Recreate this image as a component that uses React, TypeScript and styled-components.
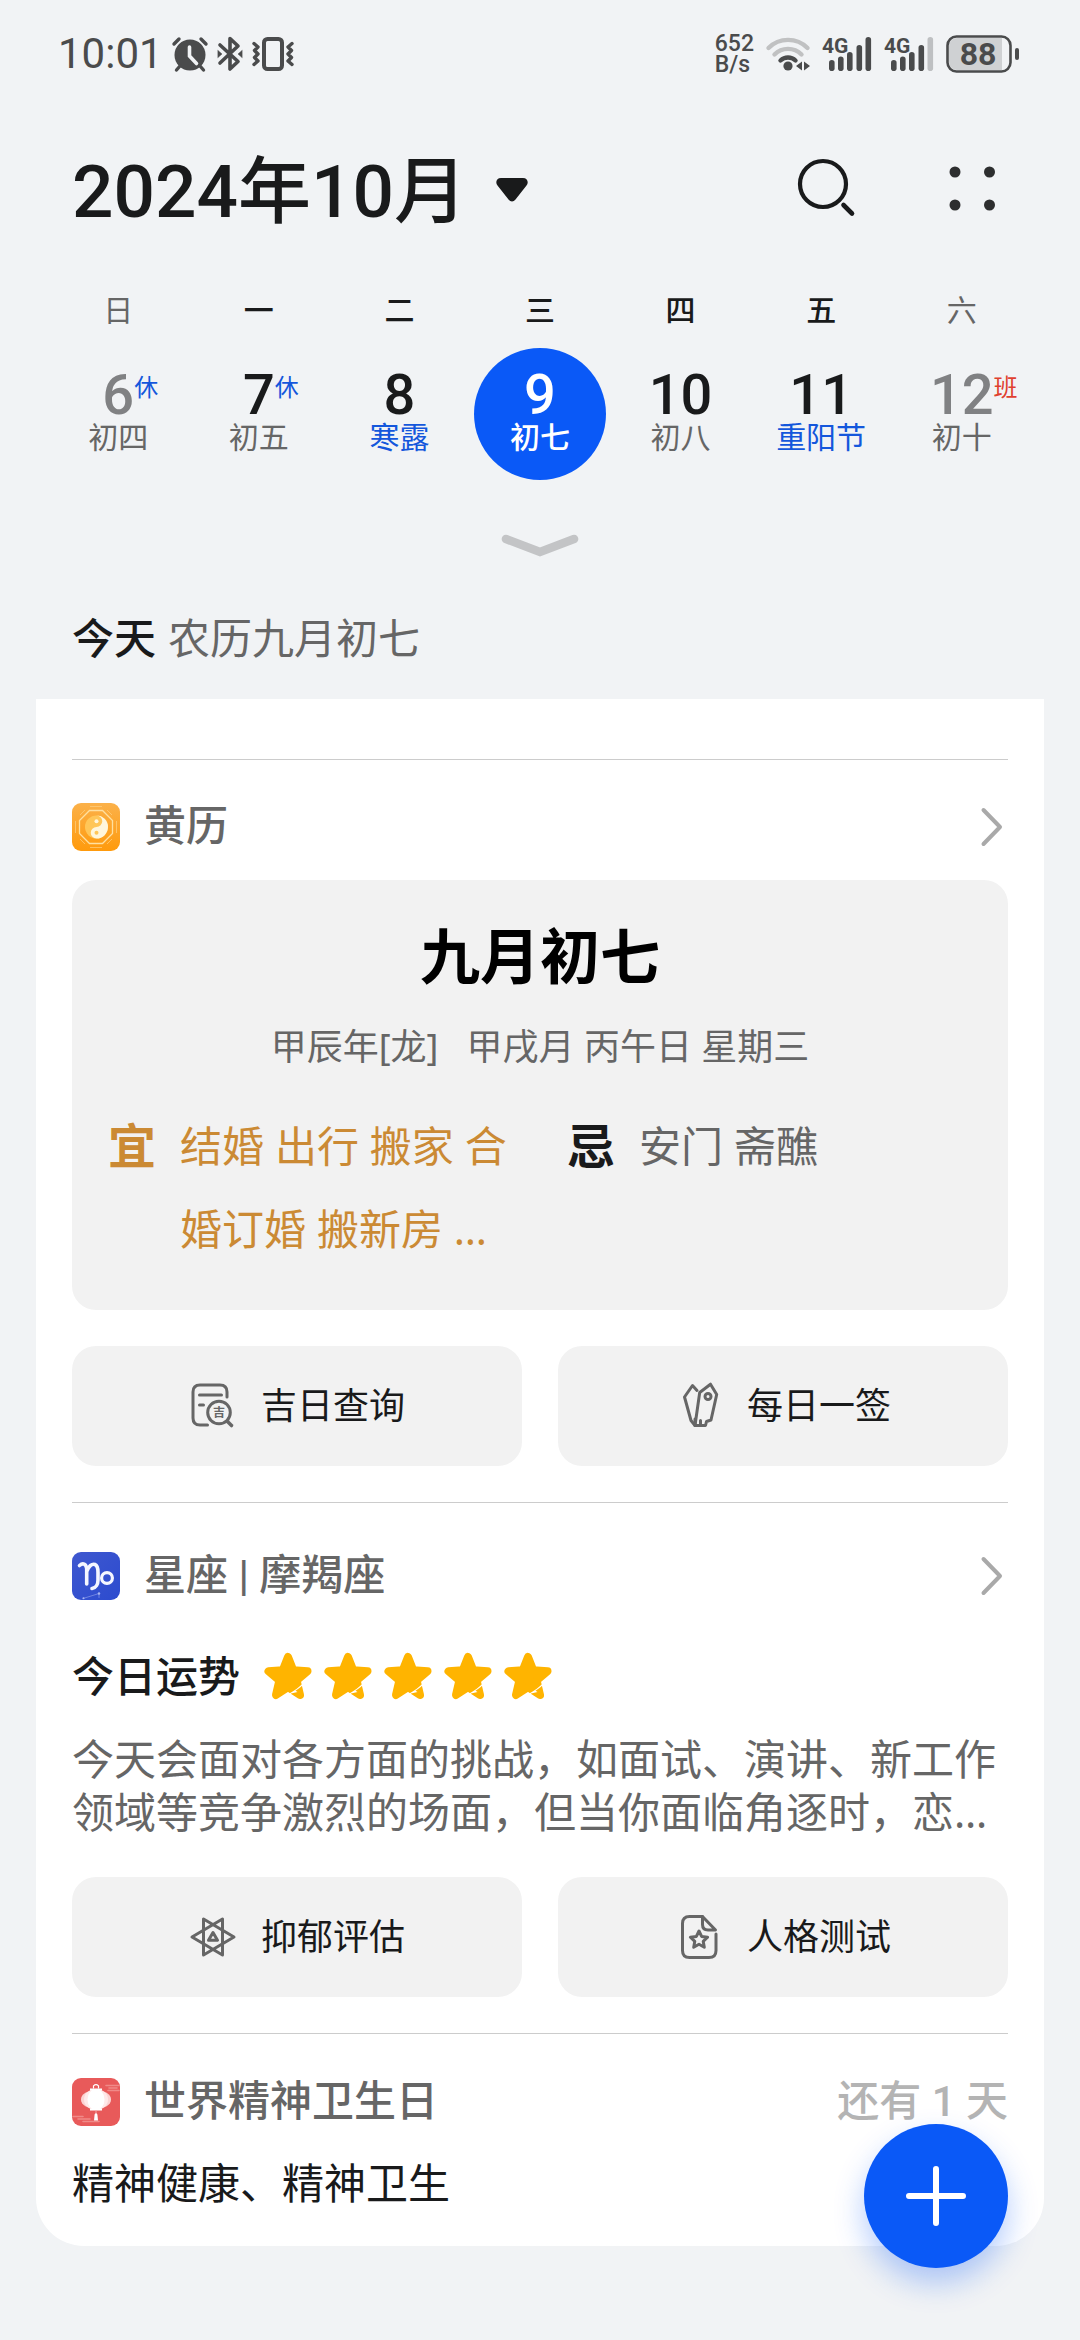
import React from "react";
import styled, { createGlobalStyle } from "styled-components";

const color = {
  page: "#f1f3f5",
  card: "#ffffff",
  tile: "#f2f2f2",
  ink: "#191a1b",
  status: "#4a4b4c",
  soft: "#666666",
  faded: "#808183",
  pale: "#b4b4b4",
  line: "#cccccc",
  accent: "#0a59f7",
  festival: "#1457dc",
  work: "#e0402f",
  gold: "#cb8a34",
  star: "#ffb400",
};

const numeric = `Roboto, "Noto Sans CJK SC", sans-serif`;

const GlobalStyle = createGlobalStyle`
  *, *::before, *::after { box-sizing: border-box; }
  body {
    margin: 0;
    background: ${color.page};
    color: ${color.ink};
    font-family: "Noto Sans", "Noto Sans CJK SC", sans-serif;
    font-size: 42px;
    line-height: 56px;
  }
  h1, h2, h3, p, ul, dl, dd, dt { margin: 0; padding: 0; }
  button { font: inherit; color: inherit; background: none; border: 0; padding: 0; cursor: pointer; }
  svg { display: block; flex: none; overflow: visible; }
`;

const Page = styled.div`
  display: flex;
  flex-direction: column;
  min-height: 100vh;
  padding-bottom: 93px;
`;

/* ---------- status bar ---------- */

const StatusBar = styled.div`
  display: flex;
  align-items: center;
  justify-content: space-between;
  height: 108px;
  padding: 0 60px 0 58px;
  color: ${color.status};
  font-family: ${numeric};
`;

const StatusGroup = styled.div<{ $gap: number }>`
  display: flex;
  align-items: center;
  gap: ${(p) => p.$gap}px;
`;

const Clock = styled.span`
  font-size: 42px;
  line-height: 48px;
`;

const Speed = styled.span`
  display: flex;
  flex-direction: column;
  font-size: 23px;
  font-weight: 500;
  line-height: 21px;
`;

const SignalSvg = styled.svg`
  font-size: 21px;
  font-weight: 700;
`;

/* ---------- header ---------- */

const Header = styled.header`
  display: flex;
  align-items: center;
  justify-content: space-between;
  padding: 32px 84px 32px 72px;
`;

const MonthButton = styled.button`
  display: flex;
  align-items: center;
  gap: 28px;
`;

const MonthTitle = styled.h1`
  padding-top: 4px;
  font-family: ${numeric};
  font-size: 73px;
  font-weight: 500;
  line-height: 96px;
`;

const HeaderActions = styled.div`
  display: flex;
  gap: 94px;
`;

const Week = styled.div`
  display: grid;
  grid-template-columns: repeat(7, 1fr);
  padding: 0 48px;
  text-align: center;
`;

const Weekday = styled.div<{ $weekend: boolean }>`
  height: 76px;
  padding-top: 18px;
  font-size: 30px;
  font-weight: ${(p) => (p.$weekend ? 400 : 500)};
  line-height: 40px;
  color: ${(p) => (p.$weekend ? color.soft : color.ink)};
`;

const Day = styled.button<{ $selected?: boolean }>`
  display: flex;
  flex-direction: column;
  align-items: center;
  justify-self: center;
  width: 132px;
  height: 132px;
  padding-top: 24px;
  border-radius: 50%;
  background: ${(p) => (p.$selected ? color.accent : "transparent")};
`;

type Tone = "normal" | "muted" | "selected";
const dayColor = { normal: color.ink, muted: color.faded, selected: "#ffffff" };

const DayNumber = styled.span<{ $tone: Tone }>`
  position: relative;
  font-family: ${numeric};
  font-size: 56px;
  font-weight: 500;
  line-height: 46px;
  color: ${(p) => dayColor[p.$tone]};
`;

const Lunar = styled.span<{ $tone: "normal" | "festival" | "selected" }>`
  font-size: 30px;
  line-height: 38px;
  white-space: nowrap;
  font-weight: ${(p) => (p.$tone === "selected" ? 500 : 400)};
  color: ${(p) => ({ normal: color.soft, festival: color.festival, selected: "#ffffff" })[p.$tone]};
`;

const Badge = styled.span<{ $work?: boolean }>`
  position: absolute;
  left: 100%;
  top: 0;
  font-size: 24px;
  font-weight: 400;
  line-height: 32px;
  color: ${(p) => (p.$work ? color.work : color.festival)};
`;

const ExpandButton = styled.button`
  display: flex;
  align-items: center;
  justify-content: center;
  height: 130px;
`;

const TodayLine = styled.h2`
  display: flex;
  gap: 12px;
  margin-bottom: 33px;
  padding: 0 72px;
  font-size: 42px;
  font-weight: 500;
  line-height: 56px;
`;

const LunarDate = styled.span`
  font-weight: 400;
  color: ${color.soft};
`;

/* ---------- cards ---------- */

const Card = styled.main`
  margin: 0 36px;
  padding: 60px 36px 35px;
  border-radius: 0 0 48px 48px;
  background: ${color.card};
`;

const Section = styled.section<{ $top: number; $bottom?: number }>`
  display: flex;
  flex-direction: column;
  padding: ${(p) => p.$top}px 0 ${(p) => p.$bottom ?? 0}px;
  border-top: 1px solid ${color.line};
`;

const SectionHead = styled.div`
  display: flex;
  align-items: center;
  gap: 24px;
  height: 52px;
  margin: -2px 0;
  padding-top: 2px;
  font-family: ${numeric};
`;

const SectionTitle = styled.h3`
  flex: 1;
  font-size: 42px;
  font-weight: 500;
  line-height: 56px;
  color: ${color.soft};
`;

const Remaining = styled.span`
  font-weight: 500;
  color: ${color.pale};
`;

const Almanac = styled.div`
  display: flex;
  flex-direction: column;
  align-items: center;
  margin-top: 30px;
  padding: 36px 36px 40px;
  border-radius: 24px;
  background: ${color.tile};
`;

const AlmanacTitle = styled.h3`
  font-size: 60px;
  font-weight: 700;
  line-height: 80px;
  color: #000000;
`;

const AlmanacSub = styled.p`
  margin-top: 27px;
  font-size: 36px;
  line-height: 48px;
  color: ${color.soft};
  white-space: pre;
`;

const Advice = styled.dl`
  display: grid;
  grid-template-columns: 1fr 1fr;
  gap: 54px;
  align-self: stretch;
  margin-top: 33px;
`;

const AdviceItem = styled.div<{ $good?: boolean }>`
  display: flex;
  gap: 24px;
  color: ${(p) => (p.$good ? color.gold : color.soft)};
`;

const AdviceMark = styled.dt<{ $good?: boolean }>`
  font-size: 48px;
  font-weight: 700;
  line-height: 83px;
  color: ${(p) => (p.$good ? color.gold : color.ink)};
`;

const AdviceText = styled.dd`
  line-height: 83px;
`;

const ButtonRow = styled.div<{ $top: number }>`
  display: grid;
  grid-template-columns: 1fr 1fr;
  gap: 36px;
  margin-top: ${(p) => p.$top}px;
`;

const TileButton = styled.button`
  display: flex;
  align-items: center;
  justify-content: center;
  gap: 24px;
  height: 120px;
  border-radius: 24px;
  background: ${color.tile};
  font-size: 36px;
  line-height: 48px;
`;

const Fortune = styled.div`
  display: flex;
  align-items: center;
  gap: 24px;
  margin-top: 49px;
  font-weight: 500;
`;

const Stars = styled.div`
  display: flex;
  gap: 12px;
`;

const Forecast = styled.p`
  margin-top: 28px;
  line-height: 53px;
  color: ${color.soft};
`;

const Note = styled.p`
  margin-top: 30px;
`;

const AddButton = styled.button`
  position: fixed;
  right: 72px;
  bottom: 72px;
  display: flex;
  align-items: center;
  justify-content: center;
  width: 144px;
  height: 144px;
  border-radius: 50%;
  background: ${color.accent};
  box-shadow: 0 15px 30px rgba(10, 89, 247, 0.3);
`;

/* ---------- drawings ---------- */

const AlarmIcon = () => (
  <svg width="36" height="36" viewBox="0 0 36 36" fill="none" stroke="currentColor" strokeLinecap="round">
    <circle cx="18" cy="19" r="15.5" fill="currentColor" stroke="none" />
    <path d="M2 8 7 3M34 8 29 3" strokeWidth="3.4" />
    <path d="M8 30 4.5 34M28 30l3.500 4" strokeWidth="3.4" />
    <path d="M17.5 11v9l7 7.500" stroke={color.page} strokeWidth="3.6" />
  </svg>
);

const BluetoothIcon = () => (
  <svg width="26" height="36" viewBox="0 0 26 36" fill="none" stroke="currentColor" strokeWidth="3.6" strokeLinecap="round" strokeLinejoin="round">
    <path d="M3 9 21 25.5 13 33V2.500l8 7.500L3 27" />
    <path d="M1 14.500 5 18l-4 3.500ZM25 14.500 21 18l4 3.500Z" fill="currentColor" strokeWidth="0.5" />
  </svg>
);

const VibrateIcon = () => (
  <svg width="42" height="36" viewBox="0 0 42 36" fill="none" stroke="currentColor" strokeLinecap="round" strokeLinejoin="round">
    <rect x="12" y="3" width="18" height="30" rx="3.5" strokeWidth="4" />
    <path d="M2 7.500 6 11l-3.500 3.500L6 18l-3.500 3.500L6 25l-4 3.500M40 7.500 36 11l3.500 3.500L36 18l3.500 3.500L36 25l4 3.500" strokeWidth="3.4" />
  </svg>
);

const WifiIcon = () => (
  <svg width="44" height="36" viewBox="0 0 44 36" fill="none" stroke="currentColor" strokeWidth="4.4" strokeLinecap="round">
    <g stroke="#c0c1c2">
      <path d="M2.500 12a27.500 27.500 0 0 1 39 0" />
      <path d="M8.500 18.500a19 19 0 0 1 27 0" />
    </g>
    <path d="M14.500 24.500a11 11 0 0 1 15 0" />
    <circle cx="22" cy="30" r="4.6" fill="currentColor" stroke="none" />
    <path d="M30 30l6-4.500v9ZM44 30l-6-4.500v9Z" fill="currentColor" stroke="none" />
  </svg>
);

const BARS = [
  [7, 24],
  [16, 20.5],
  [25, 16],
  [34.5, 9],
  [43.5, 1],
];

const SignalIcon = ({ level }: { level: number }) => (
  <SignalSvg width="50" height="36" viewBox="0 0 50 36" fill="currentColor">
    <text x="0" y="17">4G</text>
    {BARS.map(([x, y], i) => (
      <rect key={x} x={x} y={y} width="5.6" height={35 - y} rx="2.8" opacity={i < level ? 1 : 0.3} />
    ))}
  </SignalSvg>
);

const BatteryIcon = () => (
  <svg width="74" height="38" viewBox="0 0 74 38" fill="currentColor" fontSize="32" fontWeight="700">
    <path d="M11 3h45v32H11a8 8 0 0 1-8-8V11a8 8 0 0 1 8-8Z" opacity="0.2" />
    <rect x="1.5" y="1.5" width="63" height="35" rx="9" fill="none" stroke="currentColor" strokeWidth="2.6" />
    <rect x="69" y="13" width="4" height="12" rx="2" />
    <text x="32" y="30" textAnchor="middle">88</text>
  </svg>
);

const CaretIcon = () => (
  <svg width="34" height="26" viewBox="0 0 34 26" fill="currentColor">
    <path d="M6 1h22c4.500 0 6 4.500 3.500 7.500L20.500 22.500c-2 2.600-5 2.600-7 0L2.500 8.500C0 5.500 1.500 1 6 1Z" />
  </svg>
);

const SearchIcon = () => (
  <svg width="60" height="64" viewBox="0 0 60 64" fill="none" stroke="currentColor" strokeWidth="4.2" strokeLinecap="round">
    <circle cx="27" cy="26" r="23" />
    <path d="M47.500 47 56 55.500" strokeWidth="4.6" />
  </svg>
);

const DotsIcon = () => (
  <svg width="46" height="64" viewBox="0 0 46 64" fill="#2d2e2f">
    <circle cx="5" cy="14" r="5.5" />
    <circle cx="39.5" cy="14" r="5.5" />
    <circle cx="5" cy="47" r="5.5" />
    <circle cx="39.5" cy="47" r="5.5" />
  </svg>
);

const ExpandIcon = () => (
  <svg width="80" height="26" viewBox="0 0 80 26" fill="none" stroke="#c3c4c6" strokeWidth="8.6" strokeLinecap="round">
    <path d="M6 7 40 20 74 7" strokeLinejoin="miter" />
  </svg>
);

const ChevronIcon = () => (
  <svg width="36" height="48" viewBox="0 0 36 48" fill="none" stroke="#a9a9a9" strokeWidth="4" strokeLinecap="round" strokeLinejoin="round">
    <path d="M11.500 7 28 24 11.500 41" />
  </svg>
);

const TaijiIcon = () => (
  <svg width="48" height="48" viewBox="0 0 48 48" fill="none">
    <defs>
      <linearGradient id="amber" x1="0" y1="0" x2="0" y2="1">
        <stop offset="0" stopColor="#fbb14a" />
        <stop offset="1" stopColor="#ff9a0c" />
      </linearGradient>
    </defs>
    <rect width="48" height="48" rx="9" fill="url(#amber)" />
    <path d="M17.500 7.500h13l10 10v13l-10 10h-13l-10-10v-13Z" stroke="#ffe0a0" strokeWidth="1.3" />
    <path d="M18 3.500h12M18 44.500h12M3.500 18v12M44.500 18v12M8 12l5-5M35 7l5 5M8 36l5 5M35 41l5-5" stroke="#ffd080" strokeWidth="1" opacity="0.7" />
    <circle cx="24.5" cy="24" r="11.5" fill="#ffc658" />
    <path d="M24.500 12.500a11.500 11.500 0 0 1 0 23 5.750 5.750 0 0 1 0-11.500 5.750 5.750 0 0 0 0-11.500Z" fill="#fff6dc" />
    <circle cx="24.5" cy="18.3" r="2" fill="#fff6dc" />
    <circle cx="24.5" cy="29.8" r="2" fill="#ffc658" />
  </svg>
);

const CapricornIcon = () => (
  <svg width="48" height="48" viewBox="0 0 48 48" fill="none" strokeLinecap="round" strokeLinejoin="round">
    <defs>
      <linearGradient id="indigo" x1="0" y1="0" x2="1" y2="1">
        <stop offset="0" stopColor="#3f58cf" />
        <stop offset="1" stopColor="#2c4bcf" />
      </linearGradient>
    </defs>
    <rect width="48" height="48" rx="9" fill="url(#indigo)" />
    <path d="M7.500 13.500c3.500-3 6.500-1.500 7.200 3V32M15 19c1.500-5 5-7.500 8-6.500 2.500 1 3 4 3 8V28c0 4-2 8-6 8.500" stroke="#f4f6ff" strokeWidth="3.6" />
    <circle cx="35" cy="26" r="5.4" stroke="#f4f6ff" strokeWidth="3.2" />
    <path d="M11 46.500 27 41.500v4" stroke="#7f92e6" strokeWidth="0.8" />
    <circle cx="27" cy="41.5" r="1.2" fill="#a9b6f2" />
    <circle cx="11.5" cy="46.3" r="1" fill="#a9b6f2" />
  </svg>
);

const LanternIcon = () => (
  <svg width="48" height="48" viewBox="0 0 48 48" fill="none" strokeLinecap="round">
    <rect width="48" height="48" rx="9" fill="#e85a5a" />
    <path d="M34 7.500h13M37 10h8M36 12.500h11M1 38.500h10M6 41h12M11 43.500h16" stroke="#f08a88" strokeWidth="1.6" />
    <ellipse cx="24" cy="21.5" rx="15" ry="9.5" fill="#fbd3d3" />
    <ellipse cx="24" cy="21.5" rx="12" ry="10.5" fill="#ffe9e9" />
    <ellipse cx="24" cy="21.5" rx="8.5" ry="10.5" fill="#ffffff" />
    <path d="M18 10.500h12v2H18ZM18 30.500h12v2H18Z" fill="#ffffff" />
    <path d="M21.500 10V7.800c1.500-1.500 3.500-1.500 5 0V10" stroke="#ffffff" strokeWidth="1.2" />
    <path d="M24 33v3" stroke="#f4a5a5" strokeWidth="1" />
    <path d="M22.500 37.500c0-3 3-3 3 0l.5 5h-4Z" fill="#ffffff" />
  </svg>
);

const tileStroke = {
  width: 48,
  height: 48,
  viewBox: "0 0 48 48",
  fill: "none",
  stroke: color.soft,
  strokeWidth: 3,
  strokeLinecap: "round" as const,
  strokeLinejoin: "round" as const,
};

const LuckyDayIcon = () => (
  <svg {...tileStroke}>
    <path d="M18.500 43H11c-4.500 0-7-2.500-7-7V10c0-4.500 2.500-7 7-7h20c4.500 0 7 2.500 7 7v5" />
    <path d="M10.500 13h22M10.500 23h4" />
    <circle cx="30" cy="30.5" r="11.3" />
    <path d="M38.500 39.500 42.500 43.500" strokeWidth="3.6" />
    <text x="30" y="35" fontSize="12" fontWeight="700" textAnchor="middle" fill={color.soft} stroke="none">吉</text>
  </svg>
);

const DrawLotIcon = () => (
  <svg {...tileStroke}>
    <path d="M35.500 2.200 41.700 12.500 36 38l-4.500 1.500-1 4H20l4.700-33Z" />
    <circle cx="33" cy="14.5" r="3" />
    <path d="M22 8.500 17.500 3.500 9.500 15 16 38.500l4 5" />
    <path d="M20 37v5M25.500 38.500v4" />
  </svg>
);

const AssessIcon = () => (
  <svg {...tileStroke}>
    <path d="M3 24 33.500 6v36ZM45 24 14.500 6v36Z" />
    <path d="m24 19.500 4.500 7.800h-9Z" />
  </svg>
);

const PersonalityIcon = () => (
  <svg {...tileStroke}>
    <path d="M27.500 3.500H14.500c-4.500 0-7 2.500-7 7v27c0 4.500 2.500 7 7 7h19.500c4.500 0 7-2.500 7-7V21" />
    <path d="M27.500 3.500 40.500 17H33c-3.500 0-5.500-2-5.500-5.500Z" />
    <path d="m24 18 2.600 5.400 6 .8-4.400 4.100 1.100 5.900-5.300-2.900-5.300 2.900 1.100-5.900-4.400-4.100 6-.8Z" />
  </svg>
);

const StarIcon = () => (
  <svg width="48" height="48" viewBox="0 0 48 48">
    <path
      d="M24 5 29.200 18.300 43.500 19.300 32.600 28.500 36 43 24 35.200 12 43 15.400 28.500 4.500 19.300 18.800 18.300Z"
      fill={color.star}
      stroke={color.star}
      strokeWidth="8"
      strokeLinejoin="round"
    />
    <path d="M40.500 30C34 36.500 27 41 15 47.500V50H27V41.500L33.500 40 31.500 38.800C35 36.500 38 34 40.500 31.500Z" fill="#ffffff" />
  </svg>
);

const PlusIcon = () => (
  <svg width="60" height="60" viewBox="0 0 60 60" stroke="#ffffff" strokeWidth="6" strokeLinecap="round">
    <path d="M3 30h54M30 3v54" />
  </svg>
);

/* ---------- data ---------- */

interface DayInfo {
  weekday: string;
  date: number;
  lunar: string;
  festival?: boolean;
  weekend?: boolean;
  selected?: boolean;
  badge?: "休" | "班";
}

const WEEK: DayInfo[] = [
  { weekday: "日", date: 6, lunar: "初四", weekend: true, badge: "休" },
  { weekday: "一", date: 7, lunar: "初五", badge: "休" },
  { weekday: "二", date: 8, lunar: "寒露", festival: true },
  { weekday: "三", date: 9, lunar: "初七", selected: true },
  { weekday: "四", date: 10, lunar: "初八" },
  { weekday: "五", date: 11, lunar: "重阳节", festival: true },
  { weekday: "六", date: 12, lunar: "初十", weekend: true, badge: "班" },
];

export default function App() {
  return (
    <Page lang="zh-CN">
      <GlobalStyle />
      <StatusBar>
        <StatusGroup $gap={9}>
          <Clock>10:01</Clock>
          <AlarmIcon />
          <BluetoothIcon />
          <VibrateIcon />
        </StatusGroup>
        <StatusGroup $gap={12}>
          <Speed>
            <span>652</span>
            <span>B/s</span>
          </Speed>
          <WifiIcon />
          <SignalIcon level={5} />
          <SignalIcon level={4} />
          <BatteryIcon />
        </StatusGroup>
      </StatusBar>

      <Header>
        <MonthButton>
          <MonthTitle>2024年10月</MonthTitle>
          <CaretIcon />
        </MonthButton>
        <HeaderActions>
          <button aria-label="搜索">
            <SearchIcon />
          </button>
          <button aria-label="更多">
            <DotsIcon />
          </button>
        </HeaderActions>
      </Header>

      <Week>
        {WEEK.map((d) => (
          <Weekday key={d.weekday} $weekend={!!d.weekend}>
            {d.weekday}
          </Weekday>
        ))}
        {WEEK.map((d) => (
          <Day key={d.date} $selected={d.selected}>
            <DayNumber $tone={d.selected ? "selected" : d.weekend ? "muted" : "normal"}>
              {d.date}
              {d.badge && <Badge $work={d.badge === "班"}>{d.badge}</Badge>}
            </DayNumber>
            <Lunar $tone={d.selected ? "selected" : d.festival ? "festival" : "normal"}>{d.lunar}</Lunar>
          </Day>
        ))}
      </Week>

      <ExpandButton aria-label="展开月视图">
        <ExpandIcon />
      </ExpandButton>

      <TodayLine>
        今天<LunarDate>农历九月初七</LunarDate>
      </TodayLine>

      <Card>
        <Section $top={42} $bottom={36}>
          <SectionHead>
            <TaijiIcon />
            <SectionTitle>黄历</SectionTitle>
            <button aria-label="黄历详情">
              <ChevronIcon />
            </button>
          </SectionHead>
          <Almanac>
            <AlmanacTitle>九月初七</AlmanacTitle>
            <AlmanacSub>{"甲辰年[龙]   甲戌月 丙午日 星期三"}</AlmanacSub>
            <Advice>
              <AdviceItem $good>
                <AdviceMark $good>宜</AdviceMark>
                <AdviceText>结婚 出行 搬家 合婚订婚 搬新房 …</AdviceText>
              </AdviceItem>
              <AdviceItem>
                <AdviceMark>忌</AdviceMark>
                <AdviceText>安门 斋醮</AdviceText>
              </AdviceItem>
            </Advice>
          </Almanac>
          <ButtonRow $top={36}>
            <TileButton>
              <LuckyDayIcon />
              吉日查询
            </TileButton>
            <TileButton>
              <DrawLotIcon />
              每日一签
            </TileButton>
          </ButtonRow>
        </Section>

        <Section $top={48} $bottom={36}>
          <SectionHead>
            <CapricornIcon />
            <SectionTitle>星座 | 摩羯座</SectionTitle>
            <button aria-label="星座详情">
              <ChevronIcon />
            </button>
          </SectionHead>
          <Fortune>
            今日运势
            <Stars role="img" aria-label="五星">
              {[1, 2, 3, 4, 5].map((n) => (
                <StarIcon key={n} />
              ))}
            </Stars>
          </Fortune>
          <Forecast>今天会面对各方面的挑战，如面试、演讲、新工作领域等竞争激烈的场面，但当你面临角逐时，恋…</Forecast>
          <ButtonRow $top={39}>
            <TileButton>
              <AssessIcon />
              抑郁评估
            </TileButton>
            <TileButton>
              <PersonalityIcon />
              人格测试
            </TileButton>
          </ButtonRow>
        </Section>

        <Section $top={43}>
          <SectionHead>
            <LanternIcon />
            <SectionTitle>世界精神卫生日</SectionTitle>
            <Remaining>还有 1 天</Remaining>
          </SectionHead>
          <Note>精神健康、精神卫生</Note>
        </Section>
      </Card>

      <AddButton aria-label="新建日程">
        <PlusIcon />
      </AddButton>
    </Page>
  );
}
